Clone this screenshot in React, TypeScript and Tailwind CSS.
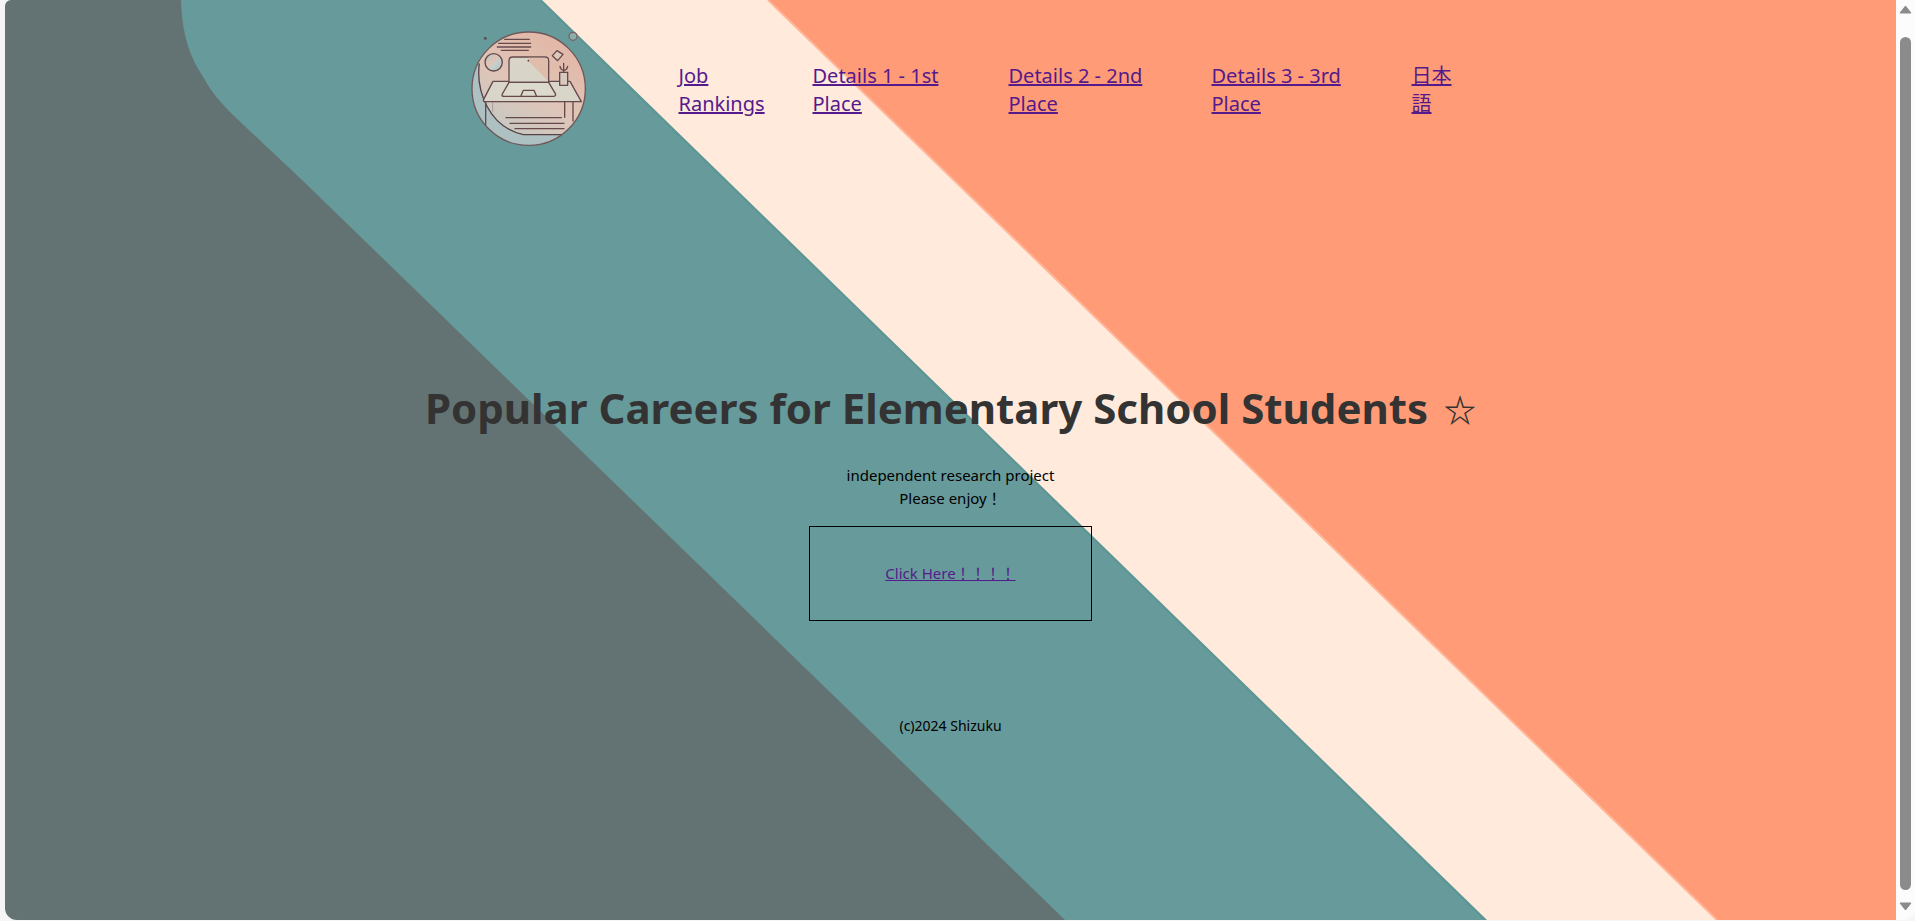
const navItems = [
  { label: 'Job Rankings', href: '#rankings' },
  { label: 'Details 1 - 1st Place', href: '#first' },
  { label: 'Details 2 - 2nd Place', href: '#second' },
  { label: 'Details 3 - 3rd Place', href: '#third' },
  { label: '日本語', href: '#ja' },
];

function Stripes() {
  return (
    <svg
      className="absolute inset-0 -z-10 h-full w-full"
      viewBox="5 0 1891 920"
      preserveAspectRatio="xMidYMid slice"
      aria-hidden="true"
    >
      <rect x="5" width="1891" height="920" fill="#637272" />
      <path
        d="M181 0C182 38 192 60 202 75C211 92 221 103 233 115L302 180L1065 920H1896V0Z"
        fill="#679a9a"
      />
      <path d="M541 0L1486 920" stroke="#5b9695" strokeWidth="3" />
      <path d="M542 0L1487 920H1896V0Z" fill="#ffeadc" />
      <path d="M768 0L1717 920H1896V0Z" fill="#ff9b76" />
      <path d="M768 0L1717 920" stroke="#ffb698" strokeWidth="2" />
    </svg>
  );
}

function Logo() {
  return (
    <svg className="size-[140px] shrink-0" viewBox="0 0 420 420" fill="none" role="img" aria-label="Home">
      <defs>
        <linearGradient id="disc" x1="0.75" y1="0.1" x2="0.25" y2="0.95">
          <stop offset="0" stopColor="#e3b8a8" />
          <stop offset="0.5" stopColor="#dfc5b8" />
          <stop offset="1" stopColor="#c2c9c5" />
        </linearGradient>
        <linearGradient id="ball" x1="0" y1="0" x2="1" y2="1">
          <stop offset="0.15" stopColor="#b9c9c8" />
          <stop offset="0.4" stopColor="#e3c3b4" />
          <stop offset="0.6" stopColor="#c7cecb" />
          <stop offset="1" stopColor="#a9c0c1" />
        </linearGradient>
        <clipPath id="discClip">
          <circle cx="206" cy="206" r="170" />
        </clipPath>
      </defs>
      <circle cx="206" cy="206" r="170" fill="url(#disc)" />
      <g clipPath="url(#discClip)">
        <path d="M58 130C48 210 84 320 190 344H310L290 390H100L20 290V150Z" fill="#adc1c2" />
        <path d="M58 130C48 210 84 320 190 344H310" stroke="#5a4145" strokeWidth="4" />
      </g>
      <g stroke="#65494b" strokeWidth="4" strokeLinejoin="round" strokeLinecap="round">
        <path d="M134 58H208M116 70H212M112 81H212M124 91H205" />
        <circle cx="101" cy="127" r="26" fill="url(#ball)" />
        <path d="M99 184H330L364 245H74Q68 244 72 236Z" fill="#d9d5c9" />
        <path d="M147 187V122Q147 111 158 111H254Q266 111 266 122V187Z" fill="#d8d5c8" />
        <path d="M204 122L264 182V124Q264 113 254 113H206Z" fill="#e0bcab" stroke="none" />
        <path d="M147 187L127 222Q124 229 132 229H281Q289 228 286 221L266 187Z" fill="#dcd9cd" />
        <path d="M183 227L190 211H222L229 227" />
        <path d="M299 157H323V196H299Z" fill="#d8c9bc" />
        <path d="M311 156V130M311 151C306 150 301 145 300 139M312 151C318 150 322 145 323 139" />
        <path d="M277 107L291 92L309 103L293 122Z" fill="#ddc9bc" />
        <path d="M77 247V314M314 247V292M339 247V303M138 293H304M150 310H312M165 326H312" />
        <path d="M98 247V275" strokeWidth="2" opacity=".5" />
      </g>
      <circle cx="206" cy="206" r="170" stroke="#70585a" strokeWidth="4" />
      <circle cx="205" cy="122" r="2.5" fill="#51393d" />
      <circle cx="76" cy="55" r="4.5" fill="#5f5054" />
      <circle cx="339" cy="49" r="12" fill="#8eacaa" stroke="#755f60" strokeWidth="3.5" />
    </svg>
  );
}

function Scrollbar() {
  return (
    <div className="flex w-[19px] shrink-0 flex-col items-center bg-[#fcfcfc] pt-[5px] pb-[9px]" aria-hidden="true">
      <svg className="h-[9px] w-[13px]" viewBox="0 0 13 9">
        <path d="M6.5 1L12 8H1Z" fill="#8b8b8b" stroke="#8b8b8b" strokeLinejoin="round" />
      </svg>
      <div className="mt-[23px] mb-3 w-[11px] flex-1 rounded-full bg-[#8b8b8b]" />
      <svg className="h-[9px] w-[13px]" viewBox="0 0 13 9">
        <path d="M6.5 8L12 1H1Z" fill="#8b8b8b" stroke="#8b8b8b" strokeLinejoin="round" />
      </svg>
    </div>
  );
}

export default function App() {
  return (
    <div className="flex min-h-screen bg-[#f5f5f5] pb-px pl-[5px] font-['Noto_Sans','Noto_Sans_CJK_JP',sans-serif] text-black">
      <div className="flex flex-1 overflow-hidden rounded-tl-md rounded-b-xl">
        <div className="relative isolate flex-1">
          <Stripes />
          <header className="flex items-center justify-center gap-[79px] pt-5 pl-3">
            <a href="#home" className="flex">
              <Logo />
            </a>
            <nav>
              <ul className="grid grid-cols-[82px_144px_151px_148px_42px] gap-x-[52px] text-[20px] leading-7">
                {navItems.map((item) => (
                  <li key={item.href}>
                    <a href={item.href} className="text-[#551a8b] underline">
                      {item.label}
                    </a>
                  </li>
                ))}
              </ul>
            </nav>
          </header>
          <main className="flex flex-col items-center pt-[218px] text-center">
            <h1 className="flex items-center gap-4 text-[42px] leading-[60px] font-bold text-[#333]">
              Popular Careers for Elementary School Students
              <span className="font-['Noto_Sans_CJK_JP'] text-[32px] leading-none">☆</span>
            </h1>
            <p className="mt-[26px] text-[15px] leading-[23px]">
              independent research project
              <br />
              Please enjoy！
            </p>
            <div className="mt-4 flex h-[95px] w-[283px] items-center justify-center border border-black">
              <a href="#start" className="text-[15px] leading-[23px] text-[#551a8b] underline">
                Click Here！！！！
              </a>
            </div>
          </main>
          <footer className="mt-[95px] text-center text-sm">(c)2024 Shizuku</footer>
        </div>
        <Scrollbar />
      </div>
    </div>
  );
}
